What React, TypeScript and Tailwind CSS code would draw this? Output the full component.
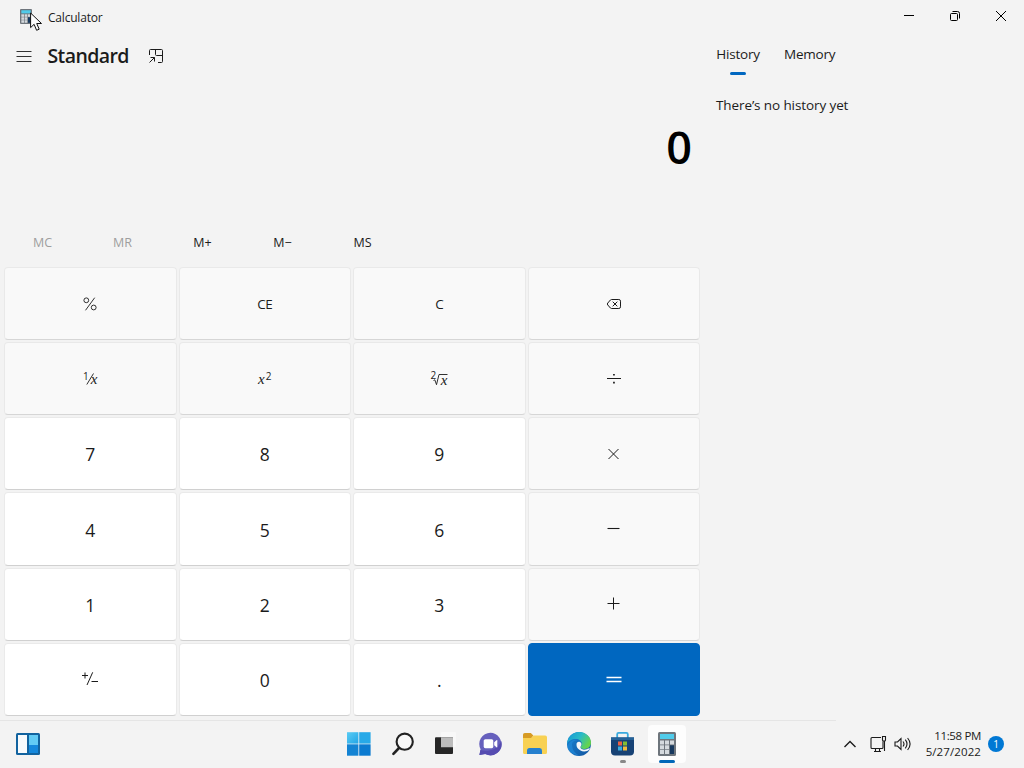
import type { ReactNode } from 'react';

const CalcIcon = ({ className }: { className: string }) => (
  <svg viewBox="0 0 18 24" className={className} preserveAspectRatio="none">
    <rect width="18" height="24" rx="1.5" fill="#6e757c" />
    <rect x="2" y="2" width="14" height="5" fill="#50cbea" />
    <g fill="#d5dade">
      <rect x="2" y="8.5" width="4" height="4" />
      <rect x="7" y="8.5" width="4" height="4" />
      <rect x="12" y="8.5" width="4" height="4" />
      <rect x="2" y="13.3" width="4" height="4" />
      <rect x="7" y="13.3" width="4" height="4" />
      <rect x="2" y="18" width="4" height="4" />
      <rect x="7" y="18" width="4" height="4" />
    </g>
    <rect x="12" y="13.3" width="4" height="8.7" fill="#17395f" />
  </svg>
);

const Glyph = ({ d, w = 1, className = '' }: { d: string; w?: number; className?: string }) => (
  <svg width="16" height="16" viewBox="0 0 16 16" fill="none" stroke="currentColor" strokeWidth={w} className={className}>
    <path d={d} />
  </svg>
);

const Digit = ({ children }: { children: ReactNode }) => <span className="pt-px text-[17.5px] leading-6">{children}</span>;
const Fn = ({ children }: { children: ReactNode }) => <span className="text-[13.5px] leading-5 tracking-[-0.4px]">{children}</span>;

const Percent = () => (
  <svg width="16" height="16" viewBox="0 0 16 16" fill="none" stroke="currentColor" strokeWidth="0.9">
    <circle cx="4.3" cy="4.3" r="2.4" />
    <circle cx="11.7" cy="11.5" r="2.4" />
    <path d="M12.700 1.700 3.500 14.300" />
  </svg>
);

const Backspace = () => (
  <svg width="16" height="16" viewBox="0 0 16 16" fill="none" stroke="currentColor">
    <path d="M5.4 3.5h7.4a1.7 1.7 0 0 1 1.7 1.7v5.6a1.7 1.7 0 0 1-1.7 1.7H5.4a1.5 1.5 0 0 1-1-.5L1.8 9a1.4 1.4 0 0 1 0-2l2.6-3a1.5 1.5 0 0 1 1-.5ZM6.7 5.7l4.6 4.6M11.3 5.7l-4.6 4.6" />
  </svg>
);

const Reciprocal = () => (
  <span className="flex items-center text-[10px] leading-4">
    <span className="-mt-1.5">1</span>
    <svg width="8" height="14" viewBox="0 0 8 14" fill="none" stroke="currentColor" strokeWidth="0.9" className="-ml-[3px]">
      <path d="M7.5 1.500.8 12.500" />
    </svg>
    <span className="-ml-[3px] mt-px font-['Liberation_Serif',serif] text-[15px] italic">x</span>
  </span>
);

const Square = () => (
  <span className="flex items-center leading-4">
    <span className="mt-px font-['Liberation_Serif',serif] text-[15px] italic">x</span>
    <span className="-mt-1.5 ml-px text-[10px]">2</span>
  </span>
);

const Root = () => (
  <span className="flex items-center leading-4">
    <span className="-mt-2 text-[10px]">2</span>
    <svg width="15" height="14" viewBox="0 0 15 14" fill="none" stroke="currentColor" strokeWidth="0.9" className="-ml-[3px]">
      <path d="M.5 8.500 1.800 7.800 3.500 12.700 6 2.500H14.500" />
    </svg>
    <span className="-ml-[8px] mt-0.5 w-2 font-['Liberation_Serif',serif] text-[15px] italic">x</span>
  </span>
);

const Sign = () => (
  <svg width="18" height="16" viewBox="0 0 18 16" fill="none" stroke="currentColor">
    <path d="M1 4.5h6M4 1.5v6M11.7 1.3 6 14M10.5 10.500h6.5" />
  </svg>
);

type Key = { face: ReactNode; kind: 'fn' | 'num' | 'eq' };
const fn = (face: ReactNode): Key => ({ face, kind: 'fn' });
const num = (n: string): Key => ({ face: <Digit>{n}</Digit>, kind: 'num' });

const keys: Key[] = [
  fn(<Percent />), fn(<Fn>CE</Fn>), fn(<Fn>C</Fn>), fn(<Backspace />),
  fn(<Reciprocal />), fn(<Square />), fn(<Root />),
  fn(
    <svg width="16" height="16" viewBox="0 0 16 16" fill="currentColor">
      <path d="M1 7h14v1H1zM7.1 2.9h1.7v1.7H7.1zM7.1 10.8h1.7v1.7H7.1z" />
    </svg>,
  ),
  num('7'), num('8'), num('9'), fn(<Glyph d="M2.500 3l10 10M12.500 3 2.500 13" />),
  num('4'), num('5'), num('6'), fn(<Glyph d="M1.500 7.500h12" w={1.1} />),
  num('1'), num('2'), num('3'), fn(<Glyph d="M1.500 7.500h12M7.500 1.500v12" />),
  { face: <Sign />, kind: 'num' }, num('0'), num('.'),
  { face: <Glyph d="M.5 5.500h15M.5 9.500h15" w={1.4} className="mt-px" />, kind: 'eq' },
];

const kindClass = {
  fn: 'bg-[#f9f9f9] border-[#e9e9e9] border-b-[#d6d6d6]',
  num: 'bg-white border-[#eaeaea] border-b-[#d0d0d0]',
  eq: 'bg-[#0067c0] border-[#0067c0] text-white',
};

const Cursor = () => (
  <svg width="13" height="20" viewBox="0 0 13 20" className="absolute left-[30px] top-[12px]">
    <path d="M.6 1v14.6l3.5-3.3 2.5 6 2.6-1.1-2.5-5.7h4.8Z" fill="#fff" stroke="#111" strokeWidth="1" />
  </svg>
);

const StartIcon = () => (
  <svg width="24" height="24" viewBox="0 0 24 24">
    <defs>
      <linearGradient id="win" x1="0" y1="0" x2="1" y2="1" gradientUnits="objectBoundingBox">
        <stop offset="0" stopColor="#5accf4" />
        <stop offset="1" stopColor="#22a5e6" />
      </linearGradient>
    </defs>
    <rect width="11.4" height="11.4" y=".2" fill="url(#win)" />
    <rect x="12.2" width="11.4" height="11.4" y=".2" fill="#27a9e8" />
    <rect y="12.3" width="11.4" height="11.4" fill="#1383d3" />
    <rect x="12.2" y="12.3" width="11.4" height="11.4" fill="#0c7bd0" />
  </svg>
);

const SearchIcon = () => (
  <svg width="24" height="24" viewBox="0 0 24 24" fill="none" stroke="#222">
    <circle cx="13.7" cy="9.7" r="8.1" strokeWidth="2.1" fill="#f8f8f8" />
    <path d="m8 16-5.6 5.8" strokeWidth="2.6" strokeLinecap="round" />
  </svg>
);

const TaskViewIcon = () => (
  <svg width="24" height="24" viewBox="0 0 24 24">
    <rect x="6" y="0" width="15" height="15" rx="1" fill="#f8f8f8" />
    <rect x="0" y="5.2" width="18" height="16.8" rx="1" fill="#262626" />
    <path d="M6 5.2h11a1 1 0 0 1 1 1v9H6Z" fill="#bcbcbc" />
  </svg>
);

const ChatIcon = () => (
  <svg width="24" height="24" viewBox="0.8 0 24 24">
    <path d="M12.2.8A11.2 11.2 0 1 1 7 22l-5.8 1 1.2-5.700A11.2 11.2 0 0 1 12.2.8Z" fill="#6660bd" />
    <path d="M23 9a11.2 11.2 0 0 1-16 13l-5.8 1L2.2 18C8 20 19 19 23 9Z" fill="#554bb0" />
    <rect x="5.5" y="7.2" width="9.6" height="9" rx="1.6" fill="#fff" />
    <path d="m16 10.3 2.6-2.2q.5-.2.5.4v6.5q0 .6-.5.4L16 13.2Z" fill="#fff" />
  </svg>
);

const FolderIcon = () => (
  <svg width="26" height="24" viewBox="0 0 26 24">
    <path d="M1 2.8Q1 1 2.8 1h6l2.5 2.5L9 7H1Z" fill="#d79b24" />
    <path d="M1 6h8l2.6-2.5h11.6Q25 3.500 25 5.200V20.500Q25 22 23.500 22H2.500Q1 22 1 20.500Z" fill="#f8d153" />
    <path d="M5 22v-3.500Q5 16 7.500 16h10.200Q20 16 20 18.500V22Z" fill="#2580ce" />
  </svg>
);

const EdgeIcon = () => (
  <svg width="24" height="24" viewBox="0 0 24 24">
    <defs>
      <linearGradient id="edgeTop" x1="0" y1="0" x2="1" y2=".5">
        <stop offset="0" stopColor="#1595d8" />
        <stop offset=".55" stopColor="#29bbc7" />
        <stop offset="1" stopColor="#65d44d" />
      </linearGradient>
      <linearGradient id="edgeBase" x1="0" y1="0" x2="1" y2="1">
        <stop offset="0" stopColor="#1785d5" />
        <stop offset="1" stopColor="#12549f" />
      </linearGradient>
    </defs>
    <circle cx="12" cy="12" r="12" fill="url(#edgeBase)" />
    <path d="M0 12C.4 5 5.600 0 12 0c7 0 12 5 12 10.600 0 4-3 6.400-6.500 6.400-3 0-4.500-1.300-3.600-2.700.9-1 1-1.700 1-2.700C14.500 9 12 7 8.800 7 4.800 7 1 9 0 12Z" fill="url(#edgeTop)" />
    <path d="M9.500 12.500C9.500 10.500 10.800 9.500 12.500 9.800c2 .6 2.600 2.600 1.400 4.300-1.600 2.500 1.500 4 4.600 3.400 1.600-.3 2.800-1 3.700-1.200.6 0 .8.500.4 1-2.300 2.500-6.500 3-9.500 1-2.600-1.500-3.700-3.400-3.600-5.800Z" fill="#f3f6f8" />
    <path d="M5 12.500c0 5 3 9 7.500 11C6 23 1.500 19.500.3 15 2 9 7 7 10.500 8.200 7 8.300 5 9.800 5 12.500Z" fill="#2089d8" opacity=".7" />
  </svg>
);

const StoreIcon = () => (
  <svg width="24" height="24" viewBox="0.5 0 24 24">
    <path d="M6.700 6V2.300Q6.700.9 8.100.9h7.800q1.400 0 1.400 1.400V6" fill="none" stroke="#39a9de" strokeWidth="1.8" />
    <path d="M.5 5.400h23V19.500Q23.500 23.500 19.500 23.500h-15Q.5 23.500.5 19.500Z" fill="#174275" />
    <path d="M.5 5.400h23V8H.5Z" fill="#246298" />
    <path d="M7.500 9.500h4v4h-4z" fill="#ef6043" />
    <path d="M12.500 9.500h4v4h-4z" fill="#83bd32" />
    <path d="M7.500 14.500h4v4h-4z" fill="#3bacdf" />
    <path d="M12.500 14.500h4v4h-4z" fill="#f2bc3c" />
  </svg>
);

const TaskItem = ({ children, mark }: { children: ReactNode; mark?: 'open' | 'active' }) => (
  <div className={`relative flex h-[38px] w-[38px] items-center justify-center rounded ${mark === 'active' ? 'bg-white/80' : ''}`}>
    {children}
    {mark === 'open' && <span className="absolute bottom-0 left-4 h-[3px] w-1.5 rounded-full bg-[#888]" />}
    {mark === 'active' && <span className="absolute bottom-0 left-[11px] h-[3px] w-4 rounded-full bg-[#0067b8]" />}
  </div>
);

export default function App() {
  return (
    <div className="relative flex h-[768px] w-[1024px] flex-col overflow-hidden bg-[#f3f3f3] font-['Open_Sans','Noto_Sans',sans-serif] text-[#1b1b1b]">
      <header className="flex h-8 shrink-0 items-center justify-between pl-5">
        <div className="flex items-center">
          <CalcIcon className="h-[15px] w-3" />
          <span className="ml-4 pt-[3px] text-[12px] leading-4 tracking-[-0.2px]">Calculator</span>
        </div>
        <div className="flex text-black">
          <div className="flex w-[46px] justify-center"><Glyph d="M3 7.500h10" /></div>
          <div className="flex w-[46px] justify-center">
            <Glyph d="M4.500 5.500h5a1 1 0 0 1 1 1v5a1 1 0 0 1-1 1h-5a1 1 0 0 1-1-1v-5a1 1 0 0 1 1-1ZM5.500 3.500h5a2 2 0 0 1 2 2v5" />
          </div>
          <div className="flex w-[46px] justify-center"><Glyph d="m3 3 10 10M13 3 3 13" /></div>
        </div>
      </header>

      <main className="flex min-h-0 flex-1">
        <section className="flex w-[700px] flex-col">
          <div className="flex h-12 items-center pl-4">
            <Glyph d="M.5 3.500h15M.5 8.500h15M.5 13.500h15" w={0.9} />
            <h1 className="ml-[15.500px] w-[81.500px] whitespace-nowrap text-[19.500px] font-semibold leading-7 tracking-[-0.6px]">Standard</h1>
            <Glyph className="ml-[19px]" d="M1.500 7V2.500a1 1 0 0 1 1-1h11a1 1 0 0 1 1 1v11a1 1 0 0 1-1 1H10M7.500 1.500v5a1 1 0 0 0 1 1h6M1.500 14.500l5-5M2.500 9.500h4v4" />
          </div>
          <div className="flex h-[137px] justify-end pr-[8px] pt-[35px] text-[45px] font-semibold leading-[64px] text-black">0</div>
          <div className="flex h-[50px] items-center pl-[2.500px] pt-0.5 text-[12.500px]">
            <span className="w-20 text-center text-[#9e9e9e]">MC</span>
            <span className="w-20 text-center text-[#9e9e9e]">MR</span>
            <span className="w-20 text-center">M+</span>
            <span className="w-20 text-center">M−</span>
            <span className="w-20 text-center">MS</span>
          </div>
          <div className="ml-1 grid h-[449px] grid-cols-4 grid-rows-6 gap-0.5">
            {keys.map((k, i) => (
              <button key={i} className={`flex items-center justify-center rounded border ${kindClass[k.kind]}`}>
                {k.face}
              </button>
            ))}
          </div>
        </section>

        <aside className="flex-1 pl-4 pt-3 text-[13.500px] leading-5">
          <div className="flex gap-6">
            <div className="flex w-11 flex-col items-center">
              <span className="tracking-[-0.18px]">History</span>
              <span className="mt-2 h-[3px] w-4 rounded-full bg-[#0067c0]" />
            </div>
            <span className="tracking-[-0.2px]">Memory</span>
          </div>
          <p className="mt-5 tracking-[-0.1px]">There’s no history yet</p>
        </aside>
      </main>

      <footer className="flex h-12 shrink-0 flex-col">
        <div className="h-px w-[836px] bg-[#e5e5e5]" />
        <div className="flex flex-1 items-center pb-px">
          <div className="w-[340px] pl-4">
            <svg width="24" height="22" viewBox="0 0 24 22">
              <rect width="24" height="22" rx="1.500" fill="#12639f" />
              <path d="M2 2h9v18H2z" fill="#f8fbfd" />
              <path d="M13 2h9v10h-9z" fill="#62cbf5" />
              <path d="M13 12h9v8h-9z" fill="#1588dc" />
            </svg>
          </div>
          <nav className="flex gap-1.5">
            <TaskItem><StartIcon /></TaskItem>
            <TaskItem><SearchIcon /></TaskItem>
            <TaskItem><TaskViewIcon /></TaskItem>
            <TaskItem><ChatIcon /></TaskItem>
            <TaskItem><FolderIcon /></TaskItem>
            <TaskItem><EdgeIcon /></TaskItem>
            <TaskItem mark="open"><StoreIcon /></TaskItem>
            <TaskItem mark="active"><CalcIcon className="h-6 w-[18px]" /></TaskItem>
          </nav>
          <div className="ml-auto flex items-center pr-5">
            <Glyph d="m2.500 11 5.500-5.500 5.500 5.500" w={1.4} />
            <svg width="18" height="18" viewBox="0 0 18 18" fill="none" stroke="#1b1b1b" strokeWidth="1.100" className="ml-3">
              <path d="M11 2.500H2a1 1 0 0 0-1 1v9a1 1 0 0 0 1 1h10a1 1 0 0 0 1-1V6M4 16.500h7M5.500 13.500v3M9.500 13.500v3M12.500 1.500h3V5a1 1 0 0 1-1 1h-1a1 1 0 0 1-1-1ZM14.500 6v10" />
            </svg>
            <svg width="18" height="16" viewBox="0 0 18 16" fill="none" stroke="#1b1b1b" strokeWidth="1.100" className="ml-1.5">
              <path d="M1 6h2.500L7 2.500v11L3.500 10H1ZM9 5.500q2 2.500 0 5M11.300 3.700q3.400 4.300 0 8.600M13.600 2q5 6 0 12" />
            </svg>
            <div className="ml-[11px] w-[58px] whitespace-nowrap text-right text-[11.500px] leading-4">
              <div className="tracking-[-0.35px]">11:58 PM</div>
              <div className="tracking-[0.1px]">5/27/2022</div>
            </div>
            <span className="ml-[7px] flex h-4 w-4 items-center justify-center rounded-full bg-[#0078d4] text-[10px] text-white">1</span>
          </div>
        </div>
      </footer>
      <Cursor />
    </div>
  );
}
